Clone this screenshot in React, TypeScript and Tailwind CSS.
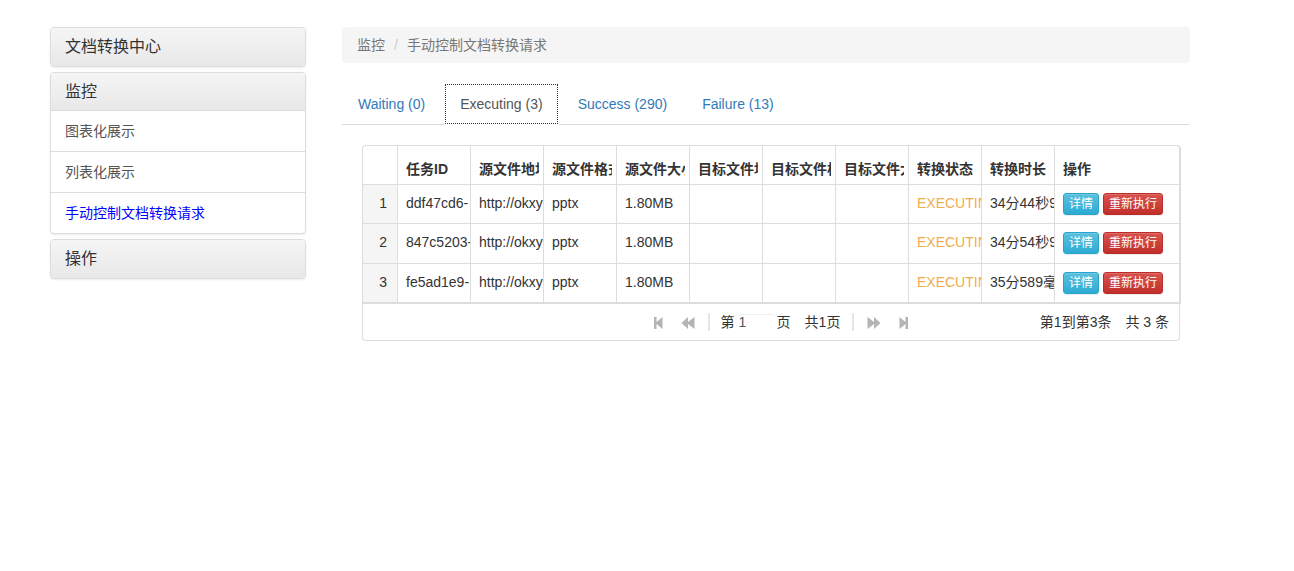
import { useState } from 'react';

const columns = [
  '任务ID',
  '源文件地址',
  '源文件格式',
  '源文件大小',
  '目标文件地址',
  '目标文件格式',
  '目标文件大小',
  '转换状态',
  '转换时长',
];

const tasks = [
  { id: 'ddf47cd6-', url: 'http://okxy', format: 'pptx', size: '1.80MB', status: 'EXECUTING', time: '34分44秒9' },
  { id: '847c5203-', url: 'http://okxy', format: 'pptx', size: '1.80MB', status: 'EXECUTING', time: '34分54秒9' },
  { id: 'fe5ad1e9-', url: 'http://okxy', format: 'pptx', size: '1.80MB', status: 'EXECUTING', time: '35分589毫' },
];

const tabs = ['Waiting (0)', 'Executing (3)', 'Success (290)', 'Failure (13)'];

const menuItems = ['图表化展示', '列表化展示', '手动控制文档转换请求'];

const heading =
  'block w-full px-[14px] text-left text-base leading-[18px] text-[#333] bg-linear-to-b from-[#f5f5f5] to-[#e8e8e8]';

const panel = 'overflow-hidden rounded border border-[#ddd] bg-white shadow-[0_1px_2px_rgba(0,0,0,0.08)]';

const cell = 'overflow-hidden whitespace-nowrap border-r border-[#ddd] pl-2 pt-2 align-top';

function StepIcon({ flip = false }: { flip?: boolean }) {
  return (
    <svg width="10" height="14" viewBox="0 0 10 14" fill="#b4b4b4" className={flip ? 'rotate-180' : ''}>
      <path d="M1 1h2.5v5L9.5 1v12L3.500 8v5H1z" />
    </svg>
  );
}

function FastIcon({ flip = false }: { flip?: boolean }) {
  return (
    <svg width="14" height="14" viewBox="0 0 14 14" fill="#b4b4b4" className={flip ? 'rotate-180' : ''}>
      <path d="M0.500 7L7 1v5l6.500-5v12L7 8v5z" />
    </svg>
  );
}

function Sidebar() {
  return (
    <nav className="flex w-64 shrink-0 flex-col gap-[5px]">
      <section className={panel}>
        <button className={heading + ' py-[10px]'}>文档转换中心</button>
      </section>
      <section className={panel}>
        <button className={heading + ' border-b border-[#ddd] pb-[9px] pt-[10px]'}>监控</button>
        <ul className="divide-y divide-[#ddd] leading-5">
          {menuItems.map((item, i) => (
            <li key={item}>
              <a
                href="#"
                className={i === 2 ? 'block px-[14px] py-[10px] text-[#0000ff]' : 'block px-[14px] py-[10px] text-[#555]'}
              >
                {item}
              </a>
            </li>
          ))}
        </ul>
      </section>
      <section className={panel}>
        <button className={heading + ' py-[10px]'}>操作</button>
      </section>
    </nav>
  );
}

function TaskTable() {
  return (
    <div className="-mr-px overflow-hidden rounded-t border-b-2 border-l border-r-2 border-t border-[#ddd]">
      <table className="w-full table-fixed border-separate border-spacing-0 leading-5">
        <colgroup>
          <col className="w-[35px]" />
          {columns.map((c) => (
            <col key={c} className="w-[73px]" />
          ))}
          <col />
        </colgroup>
        <thead>
          <tr className="h-[39px] text-left">
            <th className="border-b border-r border-[#ddd]" />
            {columns.map((c) => (
              <th key={c} className="border-b border-r border-[#ddd] pb-[5px] pl-2 pr-1 align-bottom">
                <div className="overflow-hidden whitespace-nowrap">{c}</div>
              </th>
            ))}
            <th className="border-b border-[#ddd] pb-[5px] pl-2 align-bottom">操作</th>
          </tr>
        </thead>
        <tbody className="[&>tr:not(:last-child)>td]:border-b">
          {tasks.map((t, i) => (
            <tr key={t.id} className="h-[39px] even:h-10 last:h-[38px]">
              <td className="border-r border-[#ddd] bg-[#f5f5f5] pr-[10px] pt-2 text-right align-top">{i + 1}</td>
              <td className={cell}>{t.id}</td>
              <td className={cell}>{t.url}</td>
              <td className={cell}>{t.format}</td>
              <td className={cell}>{t.size}</td>
              <td className={cell} />
              <td className={cell} />
              <td className={cell} />
              <td className={cell + ' text-[#f0ad4e]'}>{t.status}</td>
              <td className={cell}>{t.time}</td>
              <td className="border-[#ddd] pl-2 pt-2 align-top">
                <div className="flex gap-1 text-xs text-white [text-shadow:0_-1px_0_rgba(0,0,0,0.2)]">
                  <button className="h-[22px] rounded-[3px] border border-[#28a4c9] bg-linear-to-b from-[#5bc0de] to-[#2aabd2] px-[5px] leading-5 shadow-[inset_0_1px_0_rgba(255,255,255,0.15),0_1px_1px_rgba(0,0,0,0.075)]">
                    详情
                  </button>
                  <button className="h-[22px] rounded-[3px] border border-[#b92c28] bg-linear-to-b from-[#d9534f] to-[#c12e2a] px-[5px] leading-5 shadow-[inset_0_1px_0_rgba(255,255,255,0.15),0_1px_1px_rgba(0,0,0,0.075)]">
                    重新执行
                  </button>
                </div>
              </td>
            </tr>
          ))}
        </tbody>
      </table>
    </div>
  );
}

function Pager() {
  const [page, setPage] = useState('1');
  return (
    <div className="grid grid-cols-[1fr_auto_1fr] rounded-b border-x border-b border-[#ddd] pb-2 pt-2 leading-5">
      <span />
      <div className="flex items-center pl-5">
        <button aria-label="First page" className="pt-[2px]"><StepIcon /></button>
        <button aria-label="Previous page" className="ml-[18px] pt-[2px]"><FastIcon /></button>
        <span className="ml-[13px] h-[18px] w-[2px] bg-[#e5e5e5]" />
        <label className="ml-[11px] flex items-center">
          第
          <input
            value={page}
            onChange={(e) => setPage(e.target.value)}
            className="ml-px h-4 w-10 rounded border-t border-[#eee] pb-[2px] pl-[3px] text-[#555] outline-none"
          />
          <span className="ml-px">页</span>
        </label>
        <span className="ml-[14px]">共1页</span>
        <span className="ml-3 h-[18px] w-[2px] bg-[#e5e5e5]" />
        <button aria-label="Next page" className="ml-[13px] pt-[2px]"><FastIcon flip /></button>
        <button aria-label="Last page" className="ml-[18px] pt-[2px]"><StepIcon flip /></button>
      </div>
      <div className="flex justify-end gap-[14px] pr-[10px]">
        <span>第1到第3条</span>
        <span>共 3 条</span>
      </div>
    </div>
  );
}

export default function App() {
  const [active, setActive] = useState(1);
  return (
    <div className="flex min-h-screen items-start gap-9 bg-white pb-8 pl-[50px] pr-[104px] pt-[27px] font-['Liberation_Sans','Noto_Sans_CJK_SC',sans-serif] text-sm text-[#333]">
      <Sidebar />
      <main className="min-w-0 flex-1">
        <ol className="flex rounded bg-[#f5f5f5] px-[15px] py-2 leading-5 text-[#777]">
          <li>监控</li>
          <li className="px-[9px] text-[#ccc]">/</li>
          <li>手动控制文档转换请求</li>
        </ol>
        <div role="tablist" className="mt-5 flex gap-[3px] border-b border-[#ddd] leading-5">
          {tabs.map((t, i) => (
            <button
              key={t}
              role="tab"
              aria-selected={i === active}
              onClick={() => setActive(i)}
              className={
                i === active
                  ? '-mb-px bg-white px-4 py-[11px] text-[#555] outline-1 -outline-offset-2 outline-dotted outline-[#333]'
                  : '-mb-px px-4 py-[11px] text-[#337ab7]'
              }
            >
              {t}
            </button>
          ))}
        </div>
        <div className="pl-5 pr-[10px] pt-5">
          <TaskTable />
          <Pager />
        </div>
      </main>
    </div>
  );
}
